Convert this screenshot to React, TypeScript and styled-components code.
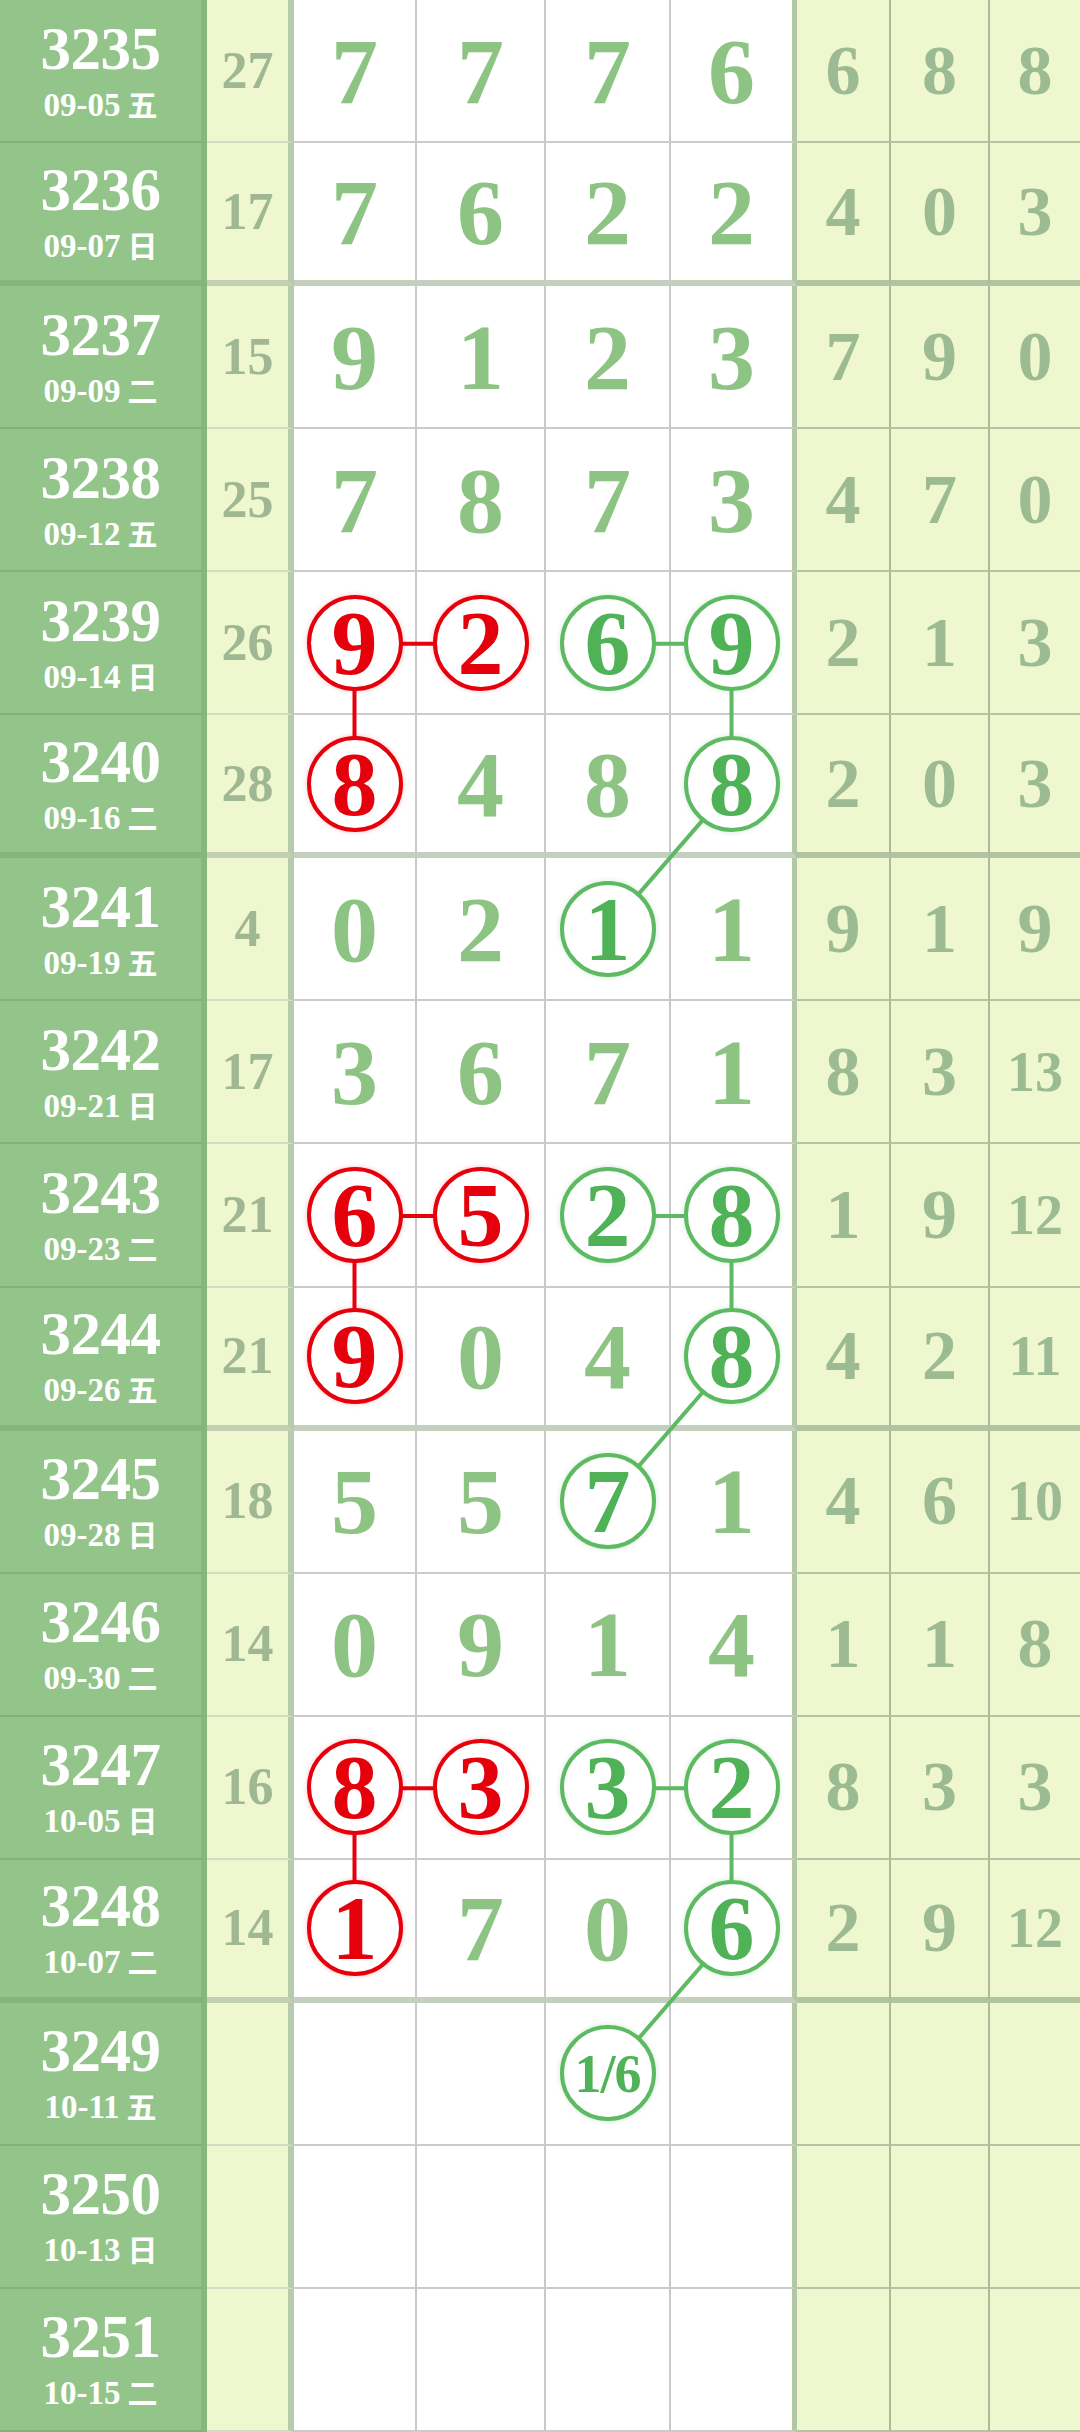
import React from 'react';
import styled, { createGlobalStyle, css } from 'styled-components';

const GlobalStyle = createGlobalStyle`
  html, body {
    margin: 0;
    padding: 0;
    background: #ffffff;
  }
  body {
    font-family: "Liberation Serif", "Times New Roman", serif;
  }
`;

const ROWS = 17;
const ROW_H = 2432 / ROWS;
const COL_X = [354.5, 480.5, 607.5, 731.5]; // centres of the four draw columns

type Mark = 'R' | 'G' | '';
type Draw = { v: string; m: Mark };
type Row = {
  no: string;
  date: string;
  wd: string;
  sum?: string;
  draw?: Draw[];
  tail?: string[];
  next?: Draw[];
};

const d = (s: string): Draw[] =>
  s.split(' ').map((t) => ({ v: t.replace(/[RG]/, ''), m: (t.match(/[RG]/)?.[0] as Mark) || '' }));

const rows: Row[] = [
  { no: '3235', date: '09-05', wd: '五', sum: '27', draw: d('7 7 7 6'), tail: ['6', '8', '8'] },
  { no: '3236', date: '09-07', wd: '日', sum: '17', draw: d('7 6 2 2'), tail: ['4', '0', '3'] },
  { no: '3237', date: '09-09', wd: '二', sum: '15', draw: d('9 1 2 3'), tail: ['7', '9', '0'] },
  { no: '3238', date: '09-12', wd: '五', sum: '25', draw: d('7 8 7 3'), tail: ['4', '7', '0'] },
  { no: '3239', date: '09-14', wd: '日', sum: '26', draw: d('9R 2R 6G 9G'), tail: ['2', '1', '3'] },
  { no: '3240', date: '09-16', wd: '二', sum: '28', draw: d('8R 4 8 8G'), tail: ['2', '0', '3'] },
  { no: '3241', date: '09-19', wd: '五', sum: '4', draw: d('0 2 1G 1'), tail: ['9', '1', '9'] },
  { no: '3242', date: '09-21', wd: '日', sum: '17', draw: d('3 6 7 1'), tail: ['8', '3', '13'] },
  { no: '3243', date: '09-23', wd: '二', sum: '21', draw: d('6R 5R 2G 8G'), tail: ['1', '9', '12'] },
  { no: '3244', date: '09-26', wd: '五', sum: '21', draw: d('9R 0 4 8G'), tail: ['4', '2', '11'] },
  { no: '3245', date: '09-28', wd: '日', sum: '18', draw: d('5 5 7G 1'), tail: ['4', '6', '10'] },
  { no: '3246', date: '09-30', wd: '二', sum: '14', draw: d('0 9 1 4'), tail: ['1', '1', '8'] },
  { no: '3247', date: '10-05', wd: '日', sum: '16', draw: d('8R 3R 3G 2G'), tail: ['8', '3', '3'] },
  { no: '3248', date: '10-07', wd: '二', sum: '14', draw: d('1R 7 0 6G'), tail: ['2', '9', '12'] },
  { no: '3249', date: '10-11', wd: '五', next: [{ v: '', m: '' }, { v: '', m: '' }, { v: '1/6', m: 'G' }, { v: '', m: '' }] },
  { no: '3250', date: '10-13', wd: '日' },
  { no: '3251', date: '10-15', wd: '二' },
];

// [row, col] pairs joined by a line
const links: { tone: 'red' | 'green'; from: [number, number]; to: [number, number] }[] = [];
[4, 8, 12].forEach((r) => {
  links.push({ tone: 'red', from: [r, 0], to: [r, 1] });
  links.push({ tone: 'red', from: [r, 0], to: [r + 1, 0] });
  links.push({ tone: 'green', from: [r, 2], to: [r, 3] });
  links.push({ tone: 'green', from: [r, 3], to: [r + 1, 3] });
  links.push({ tone: 'green', from: [r + 1, 3], to: [r + 2, 2] });
});

const Board = styled.div`
  position: relative;
  width: 1080px;
  height: 2432px;
  display: grid;
  grid-template-rows: repeat(${ROWS}, 1fr);
  overflow: hidden;
`;

const Line = styled.div`
  display: grid;
  grid-template-columns: 207px 87px 123px 129px 125px 126px 94px 99px 90px;
  min-height: 0;
`;

const cellBase = css`
  box-sizing: border-box;
  display: flex;
  align-items: center;
  justify-content: center;
  min-height: 0;
  font-weight: bold;
  line-height: 1;
`;

const PeriodCell = styled.div<{ $thick: boolean }>`
  ${cellBase};
  flex-direction: column;
  background: #93c58b;
  color: #ffffff;
  border-right: 6px solid #86b87e;
  border-bottom: ${(p) => (p.$thick ? '6px solid #84b57c' : '2px solid #82b27a')};
`;

const PeriodNo = styled.div`
  font-size: 61px;
  line-height: 60px;
  letter-spacing: -0.5px;
`;

const PeriodDate = styled.div`
  font-size: 33px;
  line-height: 36px;
  margin-top: 6px;
  display: flex;
  align-items: baseline;
  gap: 7px;
`;

const WeekDay = styled.span`
  font-family: "Noto Sans CJK SC", sans-serif;
  font-size: 30px;
  font-weight: 700;
`;

const SumCell = styled.div<{ $thick: boolean }>`
  ${cellBase};
  background: #eff7cf;
  color: #9fb893;
  font-size: 52px;
  border-right: 6px solid #b8caae;
  border-bottom: ${(p) => (p.$thick ? '6px solid #c3cfb2' : '2px solid #d6dcc4')};
`;

const DrawCell = styled.div<{ $thick: boolean; $edge?: boolean }>`
  ${cellBase};
  background: #ffffff;
  color: #8dc383;
  font-size: 94px;
  border-right: ${(p) => (p.$edge ? '5px solid #b2c7a3' : '2px solid #c9c9c9')};
  border-bottom: ${(p) => (p.$thick ? '6px solid #c3d0bd' : '2px solid #cbcbcb')};
`;

const TailCell = styled.div<{ $thick: boolean; $double?: boolean }>`
  ${cellBase};
  background: #eff7cf;
  color: #9cbb93;
  font-size: ${(p) => (p.$double ? '56px' : '70px')};
  border-right: 2px solid #a9bb9b;
  border-bottom: ${(p) => (p.$thick ? '6px solid #afc49f' : '2px solid #b3c3a4')};
  &:last-child {
    border-right: none;
  }
`;

const Ball = styled.span<{ $tone: 'red' | 'green'; $small?: boolean }>`
  position: relative;
  z-index: 2;
  box-sizing: border-box;
  width: 96px;
  height: 96px;
  border-radius: 50%;
  background: #ffffff;
  display: flex;
  align-items: center;
  justify-content: center;
  border: 4px solid ${(p) => (p.$tone === 'red' ? '#e6000c' : '#5dba63')};
  color: ${(p) => (p.$tone === 'red' ? '#e6000c' : '#4fb257')};
  box-shadow: 0 0 5px
    ${(p) => (p.$tone === 'red' ? 'rgba(230, 0, 12, 0.25)' : 'rgba(93, 186, 99, 0.3)')};
  font-size: ${(p) => (p.$small ? '54px' : '92px')};
  letter-spacing: ${(p) => (p.$small ? '-1px' : '0')};
  padding-top: ${(p) => (p.$small ? '2px' : '0')};
`;

const Links = styled.svg`
  position: absolute;
  left: 0;
  top: 0;
  z-index: 1;
  pointer-events: none;
`;

function DrawValue({ item }: { item: Draw }) {
  if (!item.v) return null;
  if (item.m === 'R') return <Ball $tone="red">{item.v}</Ball>;
  if (item.m === 'G') return <Ball $tone="green" $small={item.v.length > 1}>{item.v}</Ball>;
  return <>{item.v}</>;
}

export default function App() {
  return (
    <>
      <GlobalStyle />
      <Board>
        {rows.map((r) => {
          const thick = Number(r.no) % 4 === 0;
          const draw = r.draw || r.next || [];
          return (
            <Line key={r.no}>
              <PeriodCell $thick={thick}>
                <PeriodNo>{r.no}</PeriodNo>
                <PeriodDate>
                  {r.date}
                  <WeekDay>{r.wd}</WeekDay>
                </PeriodDate>
              </PeriodCell>
              <SumCell $thick={thick}>{r.sum}</SumCell>
              {[0, 1, 2, 3].map((c) => (
                <DrawCell key={c} $thick={thick} $edge={c === 3}>
                  {draw[c] && <DrawValue item={draw[c]} />}
                </DrawCell>
              ))}
              {[0, 1, 2].map((c) => (
                <TailCell key={c} $thick={thick} $double={(r.tail?.[c] || '').length > 1}>
                  {r.tail?.[c]}
                </TailCell>
              ))}
            </Line>
          );
        })}
        <Links width="1080" height="2432" viewBox="0 0 1080 2432">
          {links.map((l, i) => (
            <line
              key={i}
              x1={COL_X[l.from[1]]}
              y1={(l.from[0] + 0.5) * ROW_H}
              x2={COL_X[l.to[1]]}
              y2={(l.to[0] + 0.5) * ROW_H}
              stroke={l.tone === 'red' ? '#e6000c' : '#5dba63'}
              strokeWidth={4}
            />
          ))}
        </Links>
      </Board>
    </>
  );
}
